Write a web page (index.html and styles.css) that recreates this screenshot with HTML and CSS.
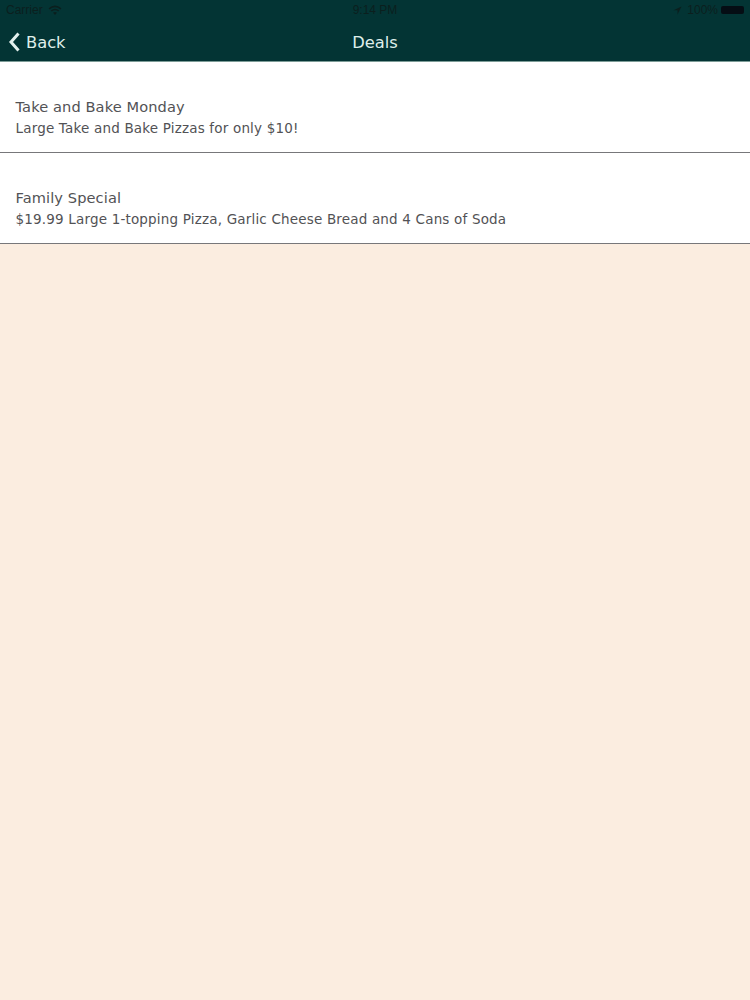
FILE: index.html
```html
<!DOCTYPE html>
<html lang="en">
<head>
    <meta charset="UTF-8">
    <meta name="viewport" content="width=device-width, initial-scale=1.0">
    <title>Deals</title>
    <link rel="stylesheet" href="styles.css">
</head>
<body>

    <div class="header">
        <div class="status">
            <div class="status-left">
                <span>Carrier</span>
                <svg class="wifi" width="14" height="11" viewBox="0 0 13 10">
                    <path d="M1 3.500C4.500 .5 8.500 .5 12 3.500" fill="none" stroke="#0b1f1e" stroke-width="1.400"/>
                    <path d="M3 5.500C5.200 3.700 7.800 3.700 10 5.500" fill="none" stroke="#0b1f1e" stroke-width="1.400"/>
                    <path d="M4.700 7C5.800 6.200 7.200 6.200 8.300 7L6.500 9.200Z" fill="#0b1f1e"/>
                </svg>
            </div>
            <div class="status-time">9:14 PM</div>
            <div class="status-right">
                <svg class="location" width="9" height="9" viewBox="0 0 9 9">
                    <path d="M8.500 .5L.5 4.200H4.500V8.500Z" fill="#0b1f1e"/>
                </svg>
                <span>100%</span>
                <div class="battery"></div>
            </div>
        </div>
        <div class="nav">
            <div class="back">
                <svg width="13" height="22" viewBox="0 0 13 22">
                    <path d="M10.500 2.500L3 11L10.500 19.500" fill="none" stroke="#e4f1ee" stroke-width="3"/>
                </svg>
                <span>Back</span>
            </div>
            <div class="nav-title">Deals</div>
            <div class="nav-side"></div>
        </div>
    </div>

    <div class="deals">
        <div class="deal">
            <div class="deal-title">Take and Bake Monday</div>
            <div class="deal-text">Large Take and Bake Pizzas for only $10!</div>
        </div>
        <div class="deal">
            <div class="deal-title">Family Special</div>
            <div class="deal-text">$19.99 Large 1-topping Pizza, Garlic Cheese Bread and 4 Cans of Soda</div>
        </div>
    </div>

</body>
</html>
```

FILE: styles.css
```css
html, body {
    height: 100%;
}
body {
    font-family: "DejaVu Sans", Verdana, sans-serif;
    background-color: #fbede0;
    color: #525255;
    margin: 0;
    padding: 0;
}
.header {
    height: 62px;
    background-color: #033434;
    border-bottom: 1px solid #7d9c97;
    box-sizing: border-box;
}
.status {
    height: 20px;
    padding: 0 6px;
    display: flex;
    align-items: center;
    justify-content: space-between;
    font-family: "Liberation Sans", Arial, sans-serif;
    font-size: 12px;
    color: #0b1f1e;
}
.status-left, .status-right {
    width: 150px;
    display: flex;
    align-items: center;
    gap: 5px;
}
.status-right {
    justify-content: flex-end;
    gap: 3px;
}
.location {
    margin-right: 2px;
}
.battery {
    width: 23px;
    height: 8px;
    background-color: #050d14;
    border-radius: 2px;
}
.nav {
    height: 44px;
    padding: 0 8px;
    display: flex;
    align-items: center;
    justify-content: space-between;
    color: #dfeeea;
    font-size: 16.300px;
}
.back, .nav-side {
    width: 100px;
}
.back {
    display: flex;
    align-items: center;
    gap: 5px;
}
.deal {
    height: 91px;
    box-sizing: border-box;
    padding: 35px 15.500px 0;
    background-color: #fff;
    border-bottom: 1px solid #77777a;
}
.deal-title {
    font-size: 14.600px;
    letter-spacing: 0.100px;
    line-height: 20px;
}
.deal-text {
    font-size: 13.500px;
    letter-spacing: 0.180px;
    line-height: 20px;
    margin-top: 0.500px;
}
```
